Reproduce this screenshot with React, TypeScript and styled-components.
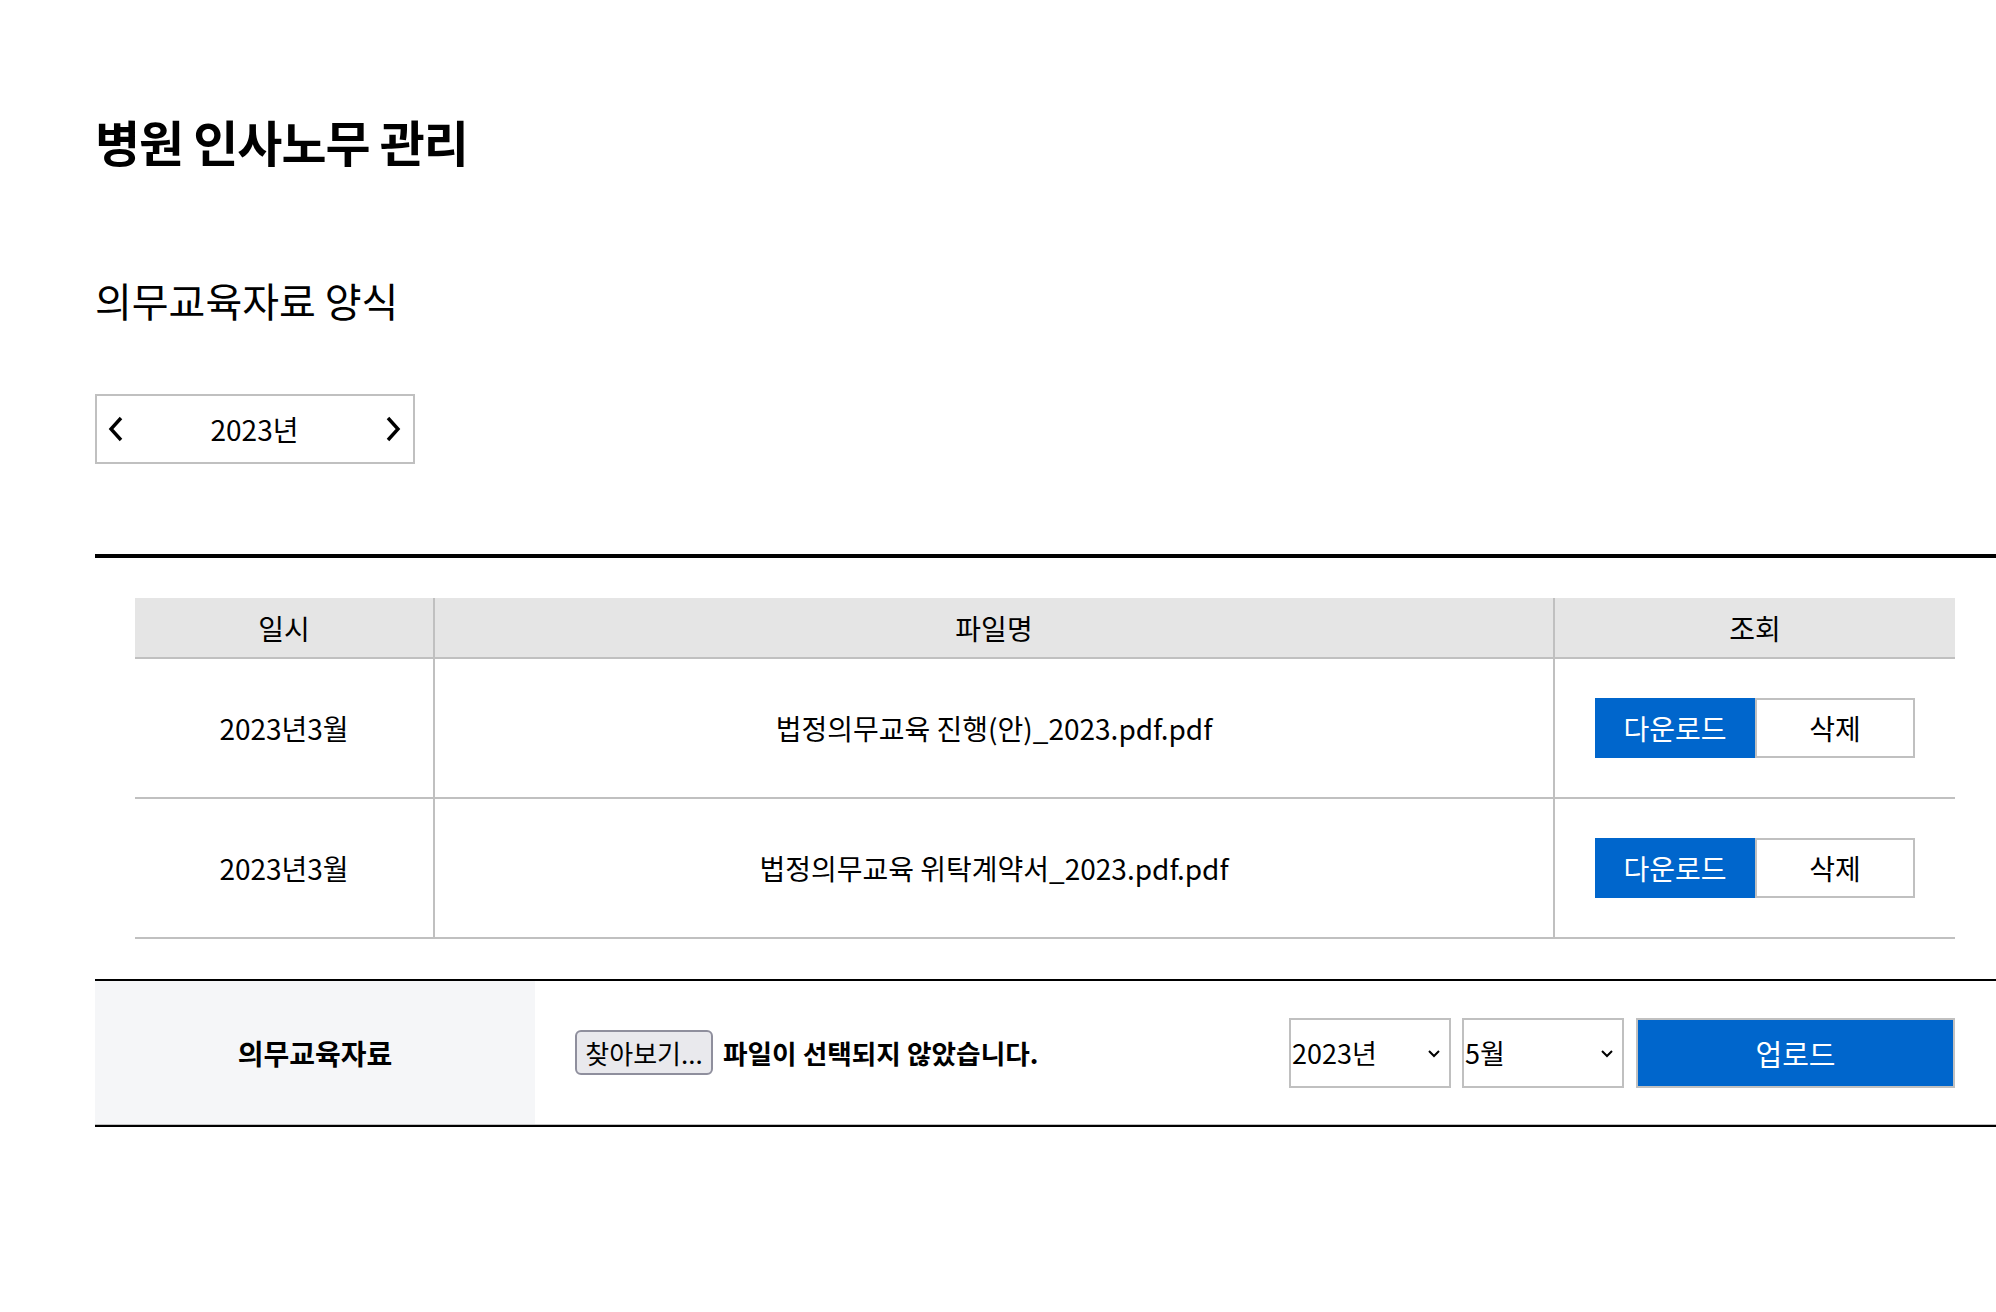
import { FC } from "react";
import styled, { createGlobalStyle } from "styled-components";

const GlobalStyle = createGlobalStyle`
  html, body {
    margin: 0;
    padding: 0;
    background: #fff;
  }
  body {
    font-family: "Noto Sans CJK KR", "Noto Sans", sans-serif;
    color: #000;
  }
  * {
    box-sizing: border-box;
  }
`;

const Page = styled.div`
  padding: 111px 0 120px 95px;
`;

const Title = styled.h1`
  margin: 0;
  font-size: 49px;
  line-height: 60px;
  font-weight: 700;
  letter-spacing: -1px;
`;

const SubTitle = styled.h2`
  margin: 105px 0 0;
  font-size: 40px;
  line-height: 48px;
  font-weight: 400;
`;

const YearNav = styled.div`
  margin-top: 70px;
  width: 320px;
  height: 70px;
  border: 2px solid #c0c0c0;
  display: flex;
  align-items: center;
  justify-content: space-between;
  padding: 0 11px 0 10px;
`;

const NavButton = styled.button`
  border: 0;
  background: none;
  padding: 0;
  display: flex;
  align-items: center;
  cursor: pointer;
`;

const NavLabel = styled.span`
  font-size: 28px;
`;

const Board = styled.section`
  margin-top: 90px;
  border-top: 4px solid #000;
  padding-top: 40px;
`;

const Table = styled.div`
  margin: 0 41px 0 40px;
`;

const Row = styled.div<{ $head?: boolean }>`
  display: grid;
  grid-template-columns: 300px 1120px 400px;
  height: ${(p) => (p.$head ? "61px" : "140px")};
  background: ${(p) => (p.$head ? "#e5e5e5" : "#fff")};
  border-bottom: 2px solid #c0c0c0;
`;

const Cell = styled.div<{ $last?: boolean }>`
  display: flex;
  align-items: center;
  justify-content: center;
  font-size: 28px;
  border-right: ${(p) => (p.$last ? "0" : "2px solid #c0c0c0")};
`;

const ActionButton = styled.button<{ $primary?: boolean }>`
  width: 160px;
  height: 60px;
  padding: 0;
  font-family: inherit;
  font-size: 28px;
  cursor: pointer;
  color: ${(p) => (p.$primary ? "#fff" : "#000")};
  background: ${(p) => (p.$primary ? "#0066cc" : "#fff")};
  border: 2px solid ${(p) => (p.$primary ? "#0066cc" : "#c0c0c0")};
`;

const UploadBar = styled.div`
  margin-top: 40px;
  display: grid;
  grid-template-columns: 440px 1fr;
  height: 148px;
  border-top: 2px solid #000;
  border-bottom: 2px solid #000;
`;

const UploadLabel = styled.div`
  display: flex;
  align-items: center;
  justify-content: center;
  background: #f5f6f8;
  border-bottom: 1px solid #c0c0c0;
  font-size: 28px;
  font-weight: 700;
`;

const UploadBody = styled.div`
  display: flex;
  align-items: center;
  padding: 0 41px 0 40px;
  border-bottom: 1px solid #c0c0c0;
`;

const FileButton = styled.button`
  width: 138px;
  height: 45px;
  padding: 0;
  font-family: inherit;
  font-size: 26px;
  color: #000;
  background: #e9e9ed;
  border: 2px solid #8f8f9d;
  border-radius: 6px;
`;

const FileStatus = styled.span`
  margin-left: 10px;
  font-size: 26.7px;
  font-weight: 700;
`;

const Controls = styled.div`
  margin-left: auto;
  display: flex;
  align-items: center;
  gap: 11px;
`;

const SelectWrap = styled.div`
  position: relative;
  width: 162px;
  height: 70px;
`;

const Select = styled.select`
  appearance: none;
  width: 100%;
  height: 100%;
  border: 2px solid #c0c0c0;
  border-radius: 0;
  background: #fff;
  padding: 0 0 0 1px;
  font-family: inherit;
  font-size: 27px;
  color: #000;
`;

const SelectArrow = styled.svg`
  position: absolute;
  right: 10px;
  top: 31px;
  pointer-events: none;
`;

const UploadButton = styled.button`
  width: 319px;
  height: 70px;
  margin-left: 1px;
  font-family: inherit;
  font-size: 29px;
  color: #fff;
  background: #0066cc;
  border: 2px solid #c0c0c0;
  cursor: pointer;
`;

const Chevron: FC<{ dir: "left" | "right" }> = ({ dir }) => (
  <svg width="18" height="28" viewBox="0 0 18 28">
    <polyline
      points={dir === "left" ? "14,3 4,14 14,25" : "4,3 14,14 4,25"}
      fill="none"
      stroke="#000"
      strokeWidth="3.4"
    />
  </svg>
);

const Arrow = () => (
  <SelectArrow width="14" height="9" viewBox="0 0 14 9">
    <polyline points="2,2 7,7 12,2" fill="none" stroke="#000" strokeWidth="2" />
  </SelectArrow>
);

const files = [
  { date: "2023년3월", name: "법정의무교육 진행(안)_2023.pdf.pdf" },
  { date: "2023년3월", name: "법정의무교육 위탁계약서_2023.pdf.pdf" },
];

const App: FC = () => {
  return (
    <Page>
      <GlobalStyle />
      <Title>병원 인사노무 관리</Title>
      <SubTitle>의무교육자료 양식</SubTitle>
      <YearNav>
        <NavButton aria-label="이전">
          <Chevron dir="left" />
        </NavButton>
        <NavLabel>2023년</NavLabel>
        <NavButton aria-label="다음">
          <Chevron dir="right" />
        </NavButton>
      </YearNav>
      <Board>
        <Table>
          <Row $head>
            <Cell>일시</Cell>
            <Cell>파일명</Cell>
            <Cell $last>조회</Cell>
          </Row>
          {files.map((f) => (
            <Row key={f.name}>
              <Cell>{f.date}</Cell>
              <Cell>{f.name}</Cell>
              <Cell $last>
                <ActionButton $primary>다운로드</ActionButton>
                <ActionButton>삭제</ActionButton>
              </Cell>
            </Row>
          ))}
        </Table>
        <UploadBar>
          <UploadLabel>의무교육자료</UploadLabel>
          <UploadBody>
            <FileButton>찾아보기...</FileButton>
            <FileStatus>파일이 선택되지 않았습니다.</FileStatus>
            <Controls>
              <SelectWrap>
                <Select defaultValue="2023">
                  <option value="2023">2023년</option>
                  <option value="2022">2022년</option>
                </Select>
                <Arrow />
              </SelectWrap>
              <SelectWrap>
                <Select defaultValue="5">
                  <option value="5">5월</option>
                  <option value="4">4월</option>
                </Select>
                <Arrow />
              </SelectWrap>
              <UploadButton>업로드</UploadButton>
            </Controls>
          </UploadBody>
        </UploadBar>
      </Board>
    </Page>
  );
};

export default App;
